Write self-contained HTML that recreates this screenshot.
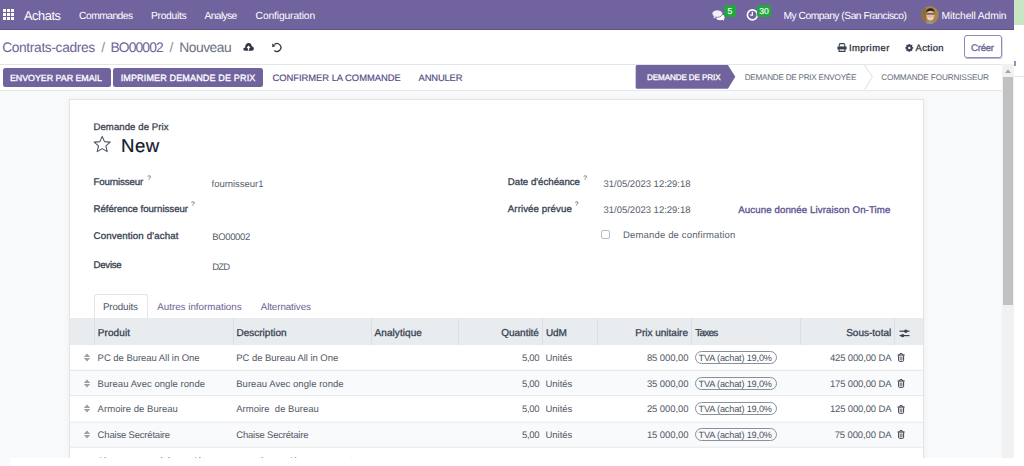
<!DOCTYPE html>
<html><head><meta charset="utf-8"><title>Achats</title>
<style>
html,body{margin:0;padding:0;}
body{width:1024px;height:466px;overflow:hidden;position:relative;background:#fff;font-family:"Liberation Sans",sans-serif;}
.t{position:absolute;white-space:pre;line-height:1;font-family:"Liberation Sans",sans-serif;text-rendering:geometricPrecision;}
.a{position:absolute;box-sizing:border-box;}

</style></head><body>
<!-- navbar -->
<div class=a style="left:0;top:0;width:1014px;height:30px;background:#71639e;"></div>
<div class=a style="left:0;top:29px;width:1014px;height:1px;background:#615588;"></div>
<div class=a style="left:1014px;top:0;width:10px;height:25px;background:#c8e6c1;"></div>
<!-- apps grid -->
<svg class=a style="left:0;top:0" width="20" height="30">
<g fill="#fff">
<rect x="3" y="9" width="3" height="3"/><rect x="7" y="9" width="3" height="3"/><rect x="11" y="9" width="3" height="3"/>
<rect x="3" y="13" width="3" height="3"/><rect x="7" y="13" width="3" height="3"/><rect x="11" y="13" width="3" height="3"/>
<rect x="3" y="17" width="3" height="3"/><rect x="7" y="17" width="3" height="3"/><rect x="11" y="17" width="3" height="3"/>
</g></svg>
<!-- chat icon -->
<svg class=a style="left:708px;top:4px" width="20" height="20" viewBox="0 0 20 20">
<ellipse cx="12.3" cy="13.2" rx="4.3" ry="3" fill="#fff"/>
<path d="M13.8 15.2 L16.2 16.8 L15.6 14.6 Z" fill="#fff"/>
<path d="M5.8 11.8 L5 15 L9 12.6 Z" fill="#f2f0f7" stroke="#71639e" stroke-width="0.6"/>
<ellipse cx="9.3" cy="9.6" rx="5.3" ry="3.7" fill="#f2f0f7" stroke="#71639e" stroke-width="0.8"/>
<path d="M6.3 12 L5.6 14.2 L8.6 12.6 Z" fill="#f2f0f7"/>
</svg>
<div class=a style="left:724px;top:5.3px;width:11.5px;height:12px;background:#22a63f;border-radius:2px;"></div>
<div class=t style="left:727.6px;top:7px;font-size:8.6px;color:#fff;-webkit-text-stroke:0.15px #fff;">5</div>
<!-- clock icon -->
<svg class=a style="left:744px;top:6px" width="18" height="18" viewBox="0 0 18 18">
<circle cx="8.4" cy="8.9" r="5" fill="none" stroke="#fff" stroke-width="1.6"/>
<path d="M8.4 5.8 V9.2 H6.3" fill="none" stroke="#fff" stroke-width="1.2"/>
</svg>
<div class=a style="left:756.7px;top:5.3px;width:14.7px;height:12px;background:#22a63f;border-radius:2px;"></div>
<div class=t style="left:759.2px;top:7px;font-size:8.6px;color:#fff;-webkit-text-stroke:0.15px #fff;">30</div>
<!-- avatar -->
<svg class=a style="left:921.3px;top:5.9px" width="18" height="18" viewBox="0 0 18 18">
<defs><clipPath id="av"><circle cx="9" cy="9" r="8.9"/></clipPath></defs>
<g clip-path="url(#av)">
<rect width="18" height="18" fill="#a8834c"/>
<rect x="0" y="0" width="5" height="18" fill="#8e6e3c"/>
<ellipse cx="9.4" cy="9.6" rx="4" ry="5.2" fill="#e2bba5"/>
<path d="M5 6.5 Q5.5 2.2 9.6 2.3 Q13.6 2.5 13.6 7 L12.6 5.2 Q9.5 4.2 6.2 5.4 Z" fill="#2e241e"/>
<path d="M5.6 7.9 H13.3" stroke="#2b2b2b" stroke-width="1"/>
<path d="M6.8 12.2 Q9.4 13.6 12 12.2" stroke="#f4f0ee" stroke-width="0.9" fill="none"/>
<path d="M3 18 Q9.4 13.5 15.5 18Z" fill="#8b99a3"/>
</g></svg>
<!-- control panel -->
<div class=a style="left:0;top:64px;width:1002px;height:1px;background:#e3e5e8;"></div>
<!-- cloud icon -->
<svg class=a style="left:242px;top:42px" width="13" height="10" viewBox="0 0 13 10">
<path d="M3.2 8.8 Q1.2 8.8 1.3 7 Q1.5 5.4 3.1 5.4 Q3.4 1.2 6.6 1.1 Q9.3 1.2 9.7 4.3 Q11.9 4.4 11.9 6.6 Q11.9 8.8 9.8 8.8 Z" fill="#2f3542"/>
<path d="M6.5 8.6 V4.6 M5 6.1 L6.5 4.4 L8 6.1" fill="none" stroke="#fff" stroke-width="1.1"/>
</svg>
<!-- undo icon -->
<svg class=a style="left:270px;top:41px" width="13" height="12" viewBox="0 0 13 12">
<path d="M4.4 3.6 A3.9 3.9 0 1 1 4.3 9.4" fill="none" stroke="#2f3542" stroke-width="1.3"/>
<path d="M2.2 2.6 L2.3 6.2 L5.6 5 Z" fill="#2f3542"/>
</svg>
<!-- print icon -->
<svg class=a style="left:837px;top:43px" width="10" height="9" viewBox="0 0 10 9">
<path d="M2.3 3.5 V1.6 Q2.3 0.6 3.3 0.6 H6.7 Q7.7 0.6 7.7 1.6 V3.5" fill="none" stroke="#374151" stroke-width="1.1"/>
<path d="M0.4 3.4 H9.6 V6.4 H0.4 Z" fill="#374151"/>
<path d="M2.1 5.6 V8.4 H7.9 V5.6" fill="none" stroke="#374151" stroke-width="1.1"/>
</svg>
<!-- gear icon -->
<svg class=a style="left:905px;top:43.5px" width="9" height="8" viewBox="0 0 9 8">
<g fill="#374151" transform="translate(4.3 3.9)">
<rect x="-0.9" y="-3.9" width="1.8" height="7.8"/>
<rect x="-0.9" y="-3.9" width="1.8" height="7.8" transform="rotate(45)"/>
<rect x="-0.9" y="-3.9" width="1.8" height="7.8" transform="rotate(90)"/>
<rect x="-0.9" y="-3.9" width="1.8" height="7.8" transform="rotate(135)"/>
<circle r="2.9"/>
</g>
<circle cx="4.3" cy="3.9" r="1.2" fill="#fff"/>
</svg>
<!-- Créer button -->
<div class=a style="left:964px;top:35px;width:38.2px;height:23.4px;border:1px solid #9187bb;border-radius:3px;box-shadow:0.5px 1px 0 rgba(113,99,158,0.45);"></div>
<!-- statusbar -->
<div class=a style="left:0;top:90px;width:1002px;height:1px;background:#e5e7eb;"></div>
<div class=a style="left:0;top:91px;width:1002px;height:375px;background:#f8f9fa;"></div>
<div class=a style="left:2.5px;top:67.5px;width:108.3px;height:19.2px;background:#71639e;border-radius:2.5px;"></div>
<div class=a style="left:113.2px;top:67.5px;width:149.6px;height:19.2px;background:#71639e;border-radius:2.5px;"></div>
<svg class=a style="left:630px;top:64px" width="372" height="26" viewBox="0 0 372 26">
<path d="M7.2 1 H97.9 L105.3 12.8 L97.9 24.8 H7.2 Q5.7 24.8 5.7 23.3 V2.5 Q5.7 1 7.2 1 Z" fill="#71639e"/>
<path d="M234.5 1 L242.3 12.8 L234.5 25.5" fill="none" stroke="#dcdfe4" stroke-width="1"/>
</svg>
<!-- scrollbar -->
<div class=a style="left:1002px;top:64px;width:12px;height:394px;background:#f1f1f1;"></div>
<svg class=a style="left:1002px;top:64px" width="12" height="12"><path d="M3 9 L6 5.5 L9 9 Z" fill="#a3a3a3"/></svg>
<div class=a style="left:1003px;top:77px;width:10px;height:228px;background:#c1c1c1;"></div>
<div class=a style="left:1014px;top:76px;width:10px;height:1px;background:#e6e6e6;"></div>
<div class=a style="left:1014px;top:61px;width:2px;height:5px;background:#8796c4;"></div>
<!-- sheet -->
<div class=a style="left:68.5px;top:98.5px;width:855.5px;height:380px;background:#fff;border:1px solid #e2e4e8;box-shadow:0 0 6px rgba(0,0,0,0.04);"></div>
<!-- star -->
<svg class=a style="left:92px;top:135px" width="21" height="19" viewBox="0 0 21 19">
<path d="M10.2 1.4 L12.5 6.6 L18.2 7.1 L13.9 10.9 L15.2 16.6 L10.2 13.6 L5.2 16.6 L6.5 10.9 L2.2 7.1 L7.9 6.6 Z" fill="none" stroke="#4b5563" stroke-width="1.1" stroke-linejoin="round"/>
</svg>
<!-- help marks -->
<div class=t style="left:147.2px;top:175.5px;font-size:6.5px;color:#374151;">?</div>
<div class=t style="left:191.1px;top:202.3px;font-size:6.5px;color:#374151;">?</div>
<div class=t style="left:583.2px;top:175.5px;font-size:6.5px;color:#374151;">?</div>
<div class=t style="left:574.8px;top:202.3px;font-size:6.5px;color:#374151;">?</div>
<!-- checkbox -->
<div class=a style="left:600.6px;top:229.6px;width:9.8px;height:9.4px;border:1px solid #b8bcc4;border-radius:2px;background:#fff;"></div>
<!-- tabs -->
<div class=a style="left:94.2px;top:293.8px;width:54.1px;height:25px;border:1px solid #e3e5e8;border-bottom:none;border-radius:3px 3px 0 0;background:#fff;"></div>
<!-- table -->
<div class=a style="left:69.5px;top:318.2px;width:853.5px;height:26.5px;background:#e9ecef;"></div>
<svg class=a style="left:0;top:318px" width="1024" height="27">
<g stroke="#dcdfe3" stroke-width="1">
<line x1="94.5" y1="0" x2="94.5" y2="27"/><line x1="233.5" y1="0" x2="233.5" y2="27"/><line x1="371.5" y1="0" x2="371.5" y2="27"/>
<line x1="458.5" y1="0" x2="458.5" y2="27"/><line x1="542.5" y1="0" x2="542.5" y2="27"/><line x1="597.5" y1="0" x2="597.5" y2="27"/>
<line x1="691.5" y1="0" x2="691.5" y2="27"/><line x1="800.5" y1="0" x2="800.5" y2="27"/><line x1="894.5" y1="0" x2="894.5" y2="27"/>
</g></svg>
<!-- settings icon -->
<svg class=a style="left:898px;top:327.5px" width="13" height="11" viewBox="0 0 13 11">
<g stroke="#374151" stroke-width="1.2"><line x1="1.5" y1="3.2" x2="11.5" y2="3.2"/><line x1="1.5" y1="7.6" x2="11.5" y2="7.6"/></g>
<circle cx="7.8" cy="3.2" r="1.7" fill="#374151"/><circle cx="4.6" cy="7.6" r="1.7" fill="#374151"/>
</svg>
<!-- rows -->
<div class=a style="left:69.5px;top:370.3px;width:853.5px;height:25.6px;background:#f9fafb;"></div>
<div class=a style="left:69.5px;top:421.5px;width:853.5px;height:25.6px;background:#f9fafb;"></div>
<svg class=a style="left:0;top:340px" width="1024" height="120">
<g stroke="#e5e7eb" stroke-width="1">
<line x1="69.5" y1="30.3" x2="923" y2="30.3"/><line x1="69.5" y1="55.6" x2="923" y2="55.6"/>
<line x1="69.5" y1="82.2" x2="923" y2="82.2"/><line x1="69.5" y1="107.2" x2="923" y2="107.2"/>
</g></svg>
<svg class=a style="left:83px;top:353px" width="8" height="9" viewBox="0 0 8 9"><path d="M0.8 3.95 L4 0.4 L7.2 3.95 Z M0.8 4.95 L4 8.4 L7.2 4.95 Z" fill="#9aa0aa"/></svg>
<div class=a style="left:694.7px;top:350.9px;width:82px;height:13.3px;border:1px solid #8a8f98;border-radius:7px;"></div>
<svg class=a style="left:896.9px;top:353.3px" width="9" height="9" viewBox="0 0 9 9"><path d="M0.6 2 H7.6" stroke="#2f3542" stroke-width="1.1"/><path d="M2.6 1.7 Q2.6 0.4 4.1 0.4 Q5.6 0.4 5.6 1.7" fill="none" stroke="#2f3542" stroke-width="0.9"/><path d="M1.6 2.4 V7.4 Q1.6 8.3 2.5 8.3 H5.7 Q6.6 8.3 6.6 7.4 V2.4" fill="none" stroke="#2f3542" stroke-width="0.95"/><path d="M3.2 3.6 V7.1 M4.1 3.6 V7.1 M5 3.6 V7.1" stroke="#2f3542" stroke-width="0.55"/></svg>
<svg class=a style="left:83px;top:379px" width="8" height="9" viewBox="0 0 8 9"><path d="M0.8 3.95 L4 0.4 L7.2 3.95 Z M0.8 4.95 L4 8.4 L7.2 4.95 Z" fill="#9aa0aa"/></svg>
<div class=a style="left:694.7px;top:376.5px;width:82px;height:13.3px;border:1px solid #8a8f98;border-radius:7px;"></div>
<svg class=a style="left:896.9px;top:378.9px" width="9" height="9" viewBox="0 0 9 9"><path d="M0.6 2 H7.6" stroke="#2f3542" stroke-width="1.1"/><path d="M2.6 1.7 Q2.6 0.4 4.1 0.4 Q5.6 0.4 5.6 1.7" fill="none" stroke="#2f3542" stroke-width="0.9"/><path d="M1.6 2.4 V7.4 Q1.6 8.3 2.5 8.3 H5.7 Q6.6 8.3 6.6 7.4 V2.4" fill="none" stroke="#2f3542" stroke-width="0.95"/><path d="M3.2 3.6 V7.1 M4.1 3.6 V7.1 M5 3.6 V7.1" stroke="#2f3542" stroke-width="0.55"/></svg>
<svg class=a style="left:83px;top:404px" width="8" height="9" viewBox="0 0 8 9"><path d="M0.8 3.95 L4 0.4 L7.2 3.95 Z M0.8 4.95 L4 8.4 L7.2 4.95 Z" fill="#9aa0aa"/></svg>
<div class=a style="left:694.7px;top:402.1px;width:82px;height:13.3px;border:1px solid #8a8f98;border-radius:7px;"></div>
<svg class=a style="left:896.9px;top:404.5px" width="9" height="9" viewBox="0 0 9 9"><path d="M0.6 2 H7.6" stroke="#2f3542" stroke-width="1.1"/><path d="M2.6 1.7 Q2.6 0.4 4.1 0.4 Q5.6 0.4 5.6 1.7" fill="none" stroke="#2f3542" stroke-width="0.9"/><path d="M1.6 2.4 V7.4 Q1.6 8.3 2.5 8.3 H5.7 Q6.6 8.3 6.6 7.4 V2.4" fill="none" stroke="#2f3542" stroke-width="0.95"/><path d="M3.2 3.6 V7.1 M4.1 3.6 V7.1 M5 3.6 V7.1" stroke="#2f3542" stroke-width="0.55"/></svg>
<svg class=a style="left:83px;top:430px" width="8" height="9" viewBox="0 0 8 9"><path d="M0.8 3.95 L4 0.4 L7.2 3.95 Z M0.8 4.95 L4 8.4 L7.2 4.95 Z" fill="#9aa0aa"/></svg>
<div class=a style="left:694.7px;top:427.7px;width:82px;height:13.3px;border:1px solid #8a8f98;border-radius:7px;"></div>
<svg class=a style="left:896.9px;top:430.1px" width="9" height="9" viewBox="0 0 9 9"><path d="M0.6 2 H7.6" stroke="#2f3542" stroke-width="1.1"/><path d="M2.6 1.7 Q2.6 0.4 4.1 0.4 Q5.6 0.4 5.6 1.7" fill="none" stroke="#2f3542" stroke-width="0.9"/><path d="M1.6 2.4 V7.4 Q1.6 8.3 2.5 8.3 H5.7 Q6.6 8.3 6.6 7.4 V2.4" fill="none" stroke="#2f3542" stroke-width="0.95"/><path d="M3.2 3.6 V7.1 M4.1 3.6 V7.1 M5 3.6 V7.1" stroke="#2f3542" stroke-width="0.55"/></svg>
<!-- bottom add-line partial text -->
<div class=a style="left:10px;top:458px;width:1014px;height:8px;background:#fff;z-index:5;"></div>

<div class=t style="top:10.00px;font-size:12.80px;color:#fff;letter-spacing:-0.426px;left:23.99px;">Achats</div>
<div class=t style="top:12.00px;font-size:10.30px;color:#fff;letter-spacing:-0.549px;left:79.09px;">Commandes</div>
<div class=t style="top:12.00px;font-size:10.30px;color:#fff;letter-spacing:-0.327px;left:151.09px;">Produits</div>
<div class=t style="top:12.00px;font-size:10.30px;color:#fff;letter-spacing:-0.674px;left:204.59px;">Analyse</div>
<div class=t style="top:12.00px;font-size:10.30px;color:#fff;letter-spacing:-0.139px;left:255.59px;">Configuration</div>
<div class=t style="top:12.00px;font-size:10.30px;color:#fff;letter-spacing:-0.513px;left:783.49px;">My Company (San Francisco)</div>
<div class=t style="top:12.00px;font-size:10.30px;color:#fff;letter-spacing:-0.108px;left:941.59px;">Mitchell Admin</div>
<div class=t style="top:41.00px;font-size:13.80px;color:#6f6496;letter-spacing:-0.362px;left:2.15px;">Contrats-cadres</div>
<div class=t style="top:41.00px;font-size:13.80px;color:#8a8f98;left:101.15px;">/</div>
<div class=t style="top:41.00px;font-size:13.80px;color:#6f6496;letter-spacing:-0.852px;left:110.45px;">BO00002</div>
<div class=t style="top:41.00px;font-size:13.80px;color:#8a8f98;left:169.45px;">/</div>
<div class=t style="top:41.00px;font-size:13.80px;color:#6b7280;letter-spacing:-0.473px;left:179.25px;">Nouveau</div>
<div class=t style="top:43.00px;font-size:9.40px;color:#2f3542;letter-spacing:0.489px;left:848.92px;-webkit-text-stroke:0.3px #2f3542;">Imprimer</div>
<div class=t style="top:43.00px;font-size:9.40px;color:#2f3542;letter-spacing:0.355px;left:915.62px;-webkit-text-stroke:0.3px #2f3542;">Action</div>
<div class=t style="top:44.00px;font-size:9.60px;color:#6a5d9a;letter-spacing:-0.301px;left:971.12px;-webkit-text-stroke:0.3px #6a5d9a;">Créer</div>
<div class=t style="top:74.00px;font-size:8.90px;color:#fff;letter-spacing:-0.032px;left:9.94px;-webkit-text-stroke:0.3px #fff;">ENVOYER PAR EMAIL</div>
<div class=t style="top:74.00px;font-size:9.10px;color:#fff;letter-spacing:0.101px;left:120.64px;-webkit-text-stroke:0.3px #fff;">IMPRIMER DEMANDE DE PRIX</div>
<div class=t style="top:73.00px;font-size:9.40px;color:#504b82;letter-spacing:-0.025px;left:272.52px;-webkit-text-stroke:0.15px #504b82;">CONFIRMER LA COMMANDE</div>
<div class=t style="top:73.00px;font-size:9.40px;color:#504b82;letter-spacing:-0.154px;left:418.62px;-webkit-text-stroke:0.15px #504b82;">ANNULER</div>
<div class=t style="top:74.00px;font-size:8.10px;color:#fff;letter-spacing:-0.104px;left:646.98px;-webkit-text-stroke:0.3px #fff;">DEMANDE DE PRIX</div>
<div class=t style="top:74.00px;font-size:8.20px;color:#656b78;letter-spacing:-0.273px;left:744.67px;">DEMANDE DE PRIX ENVOYÉE</div>
<div class=t style="top:74.00px;font-size:8.20px;color:#656b78;letter-spacing:-0.142px;left:881.17px;">COMMANDE FOURNISSEUR</div>
<div class=t style="top:123.00px;font-size:9.60px;color:#3f4550;letter-spacing:0.074px;left:93.42px;-webkit-text-stroke:0.3px #3f4550;">Demande de Prix</div>
<div class=t style="top:137.00px;font-size:18.60px;color:#111827;letter-spacing:0.494px;left:121.06px;-webkit-text-stroke:0.2px #111827;">New</div>
<div class=t style="top:178.00px;font-size:9.70px;color:#374151;letter-spacing:-0.141px;left:93.51px;-webkit-text-stroke:0.3px #374151;">Fournisseur</div>
<div class=t style="top:180.00px;font-size:9.50px;color:#575e6b;letter-spacing:-0.043px;left:211.62px;">fournisseur1</div>
<div class=t style="top:205.00px;font-size:9.70px;color:#374151;letter-spacing:-0.037px;left:93.51px;-webkit-text-stroke:0.3px #374151;">Référence fournisseur</div>
<div class=t style="top:232.00px;font-size:9.70px;color:#374151;letter-spacing:0.133px;left:93.51px;-webkit-text-stroke:0.3px #374151;">Convention d&#x27;achat</div>
<div class=t style="top:233.00px;font-size:9.50px;color:#575e6b;letter-spacing:-0.357px;left:212.22px;">BO00002</div>
<div class=t style="top:261.00px;font-size:9.70px;color:#374151;letter-spacing:-0.270px;left:93.51px;-webkit-text-stroke:0.3px #374151;">Devise</div>
<div class=t style="top:263.00px;font-size:9.50px;color:#575e6b;letter-spacing:-0.763px;left:212.22px;">DZD</div>
<div class=t style="top:178.00px;font-size:9.70px;color:#374151;letter-spacing:-0.014px;left:507.81px;-webkit-text-stroke:0.3px #374151;">Date d&#x27;échéance</div>
<div class=t style="top:180.00px;font-size:9.50px;color:#575e6b;letter-spacing:-0.009px;left:603.52px;">31/05/2023 12:29:18</div>
<div class=t style="top:205.00px;font-size:9.70px;color:#374151;letter-spacing:0.079px;left:507.81px;-webkit-text-stroke:0.3px #374151;">Arrivée prévue</div>
<div class=t style="top:206.00px;font-size:9.50px;color:#575e6b;letter-spacing:-0.009px;left:603.52px;">31/05/2023 12:29:18</div>
<div class=t style="top:206.00px;font-size:9.70px;color:#5b5290;letter-spacing:0.095px;left:738.21px;-webkit-text-stroke:0.3px #5b5290;">Aucune donnée Livraison On-Time</div>
<div class=t style="top:231.00px;font-size:9.50px;color:#575e6b;letter-spacing:0.160px;left:623.02px;">Demande de confirmation</div>
<div class=t style="top:303.00px;font-size:9.80px;color:#4b5563;letter-spacing:-0.122px;left:102.91px;">Produits</div>
<div class=t style="top:303.00px;font-size:9.80px;color:#6a6392;left:157.21px;">Autres informations</div>
<div class=t style="top:303.00px;font-size:9.80px;color:#6a6392;letter-spacing:-0.091px;left:260.71px;">Alternatives</div>
<div class=t style="top:329.00px;font-size:10.00px;color:#374151;letter-spacing:0.086px;left:97.80px;-webkit-text-stroke:0.3px #374151;">Produit</div>
<div class=t style="top:329.00px;font-size:10.00px;color:#374151;left:236.50px;-webkit-text-stroke:0.3px #374151;">Description</div>
<div class=t style="top:329.00px;font-size:10.00px;color:#374151;letter-spacing:0.078px;left:374.50px;-webkit-text-stroke:0.3px #374151;">Analytique</div>
<div class=t style="top:329.00px;font-size:10.00px;color:#374151;letter-spacing:-0.029px;right:485.13px;-webkit-text-stroke:0.3px #374151;">Quantité</div>
<div class=t style="top:329.00px;font-size:10.00px;color:#374151;letter-spacing:-0.107px;left:546.00px;-webkit-text-stroke:0.3px #374151;">UdM</div>
<div class=t style="top:329.00px;font-size:10.00px;color:#374151;letter-spacing:-0.008px;right:336.01px;-webkit-text-stroke:0.3px #374151;">Prix unitaire</div>
<div class=t style="top:329.00px;font-size:10.00px;color:#374151;letter-spacing:-0.806px;left:695.30px;-webkit-text-stroke:0.3px #374151;">Taxes</div>
<div class=t style="top:329.00px;font-size:10.00px;color:#374151;right:132.80px;-webkit-text-stroke:0.3px #374151;">Sous-total</div>
<div class=t style="top:354.00px;font-size:9.50px;color:#525966;letter-spacing:-0.044px;left:97.62px;">PC de Bureau All in One</div>
<div class=t style="top:354.00px;font-size:9.50px;color:#525966;letter-spacing:-0.044px;left:236.22px;">PC de Bureau All in One</div>
<div class=t style="top:354.00px;font-size:9.50px;color:#525966;letter-spacing:-0.297px;right:484.80px;">5,00</div>
<div class=t style="top:354.00px;font-size:9.50px;color:#525966;letter-spacing:-0.026px;left:545.52px;">Unités</div>
<div class=t style="top:354.00px;font-size:9.50px;color:#525966;letter-spacing:-0.083px;right:335.58px;">85 000,00</div>
<div class=t style="top:354.00px;font-size:9.20px;color:#4b5563;letter-spacing:-0.183px;left:698.53px;">TVA (achat) 19,0%</div>
<div class=t style="top:354.00px;font-size:9.50px;color:#525966;letter-spacing:-0.149px;right:132.65px;">425 000,00 DA</div>
<div class=t style="top:380.00px;font-size:9.50px;color:#525966;letter-spacing:0.040px;left:97.62px;">Bureau Avec ongle ronde</div>
<div class=t style="top:380.00px;font-size:9.50px;color:#525966;letter-spacing:0.040px;left:236.22px;">Bureau Avec ongle ronde</div>
<div class=t style="top:380.00px;font-size:9.50px;color:#525966;letter-spacing:-0.297px;right:484.80px;">5,00</div>
<div class=t style="top:380.00px;font-size:9.50px;color:#525966;letter-spacing:-0.026px;left:545.52px;">Unités</div>
<div class=t style="top:380.00px;font-size:9.50px;color:#525966;letter-spacing:-0.083px;right:335.58px;">35 000,00</div>
<div class=t style="top:380.00px;font-size:9.20px;color:#4b5563;letter-spacing:-0.183px;left:698.53px;">TVA (achat) 19,0%</div>
<div class=t style="top:380.00px;font-size:9.50px;color:#525966;letter-spacing:-0.149px;right:132.65px;">175 000,00 DA</div>
<div class=t style="top:405.00px;font-size:9.50px;color:#525966;letter-spacing:0.035px;left:97.62px;">Armoire de Bureau</div>
<div class=t style="top:405.00px;font-size:9.50px;color:#525966;letter-spacing:0.013px;left:236.22px;">Armoire  de Bureau</div>
<div class=t style="top:405.00px;font-size:9.50px;color:#525966;letter-spacing:-0.297px;right:484.80px;">5,00</div>
<div class=t style="top:405.00px;font-size:9.50px;color:#525966;letter-spacing:-0.026px;left:545.52px;">Unités</div>
<div class=t style="top:405.00px;font-size:9.50px;color:#525966;letter-spacing:-0.083px;right:335.58px;">25 000,00</div>
<div class=t style="top:405.00px;font-size:9.20px;color:#4b5563;letter-spacing:-0.183px;left:698.53px;">TVA (achat) 19,0%</div>
<div class=t style="top:405.00px;font-size:9.50px;color:#525966;letter-spacing:-0.149px;right:132.65px;">125 000,00 DA</div>
<div class=t style="top:431.00px;font-size:9.50px;color:#525966;letter-spacing:-0.188px;left:97.62px;">Chaise Secrétaire</div>
<div class=t style="top:431.00px;font-size:9.50px;color:#525966;letter-spacing:-0.201px;left:236.22px;">Chaise Secrétaire</div>
<div class=t style="top:431.00px;font-size:9.50px;color:#525966;letter-spacing:-0.297px;right:484.80px;">5,00</div>
<div class=t style="top:431.00px;font-size:9.50px;color:#525966;letter-spacing:-0.026px;left:545.52px;">Unités</div>
<div class=t style="top:431.00px;font-size:9.50px;color:#525966;letter-spacing:-0.083px;right:335.58px;">15 000,00</div>
<div class=t style="top:431.00px;font-size:9.20px;color:#4b5563;letter-spacing:-0.183px;left:698.53px;">TVA (achat) 19,0%</div>
<div class=t style="top:431.00px;font-size:9.50px;color:#525966;letter-spacing:-0.113px;right:132.61px;">75 000,00 DA</div>
<div class=t style="top:457.00px;font-size:9.50px;color:#71639e;left:97.62px;">Ajouter un produit</div>
<div class=t style="top:457.00px;font-size:9.50px;color:#71639e;left:192.42px;">Ajouter une section</div>
<div class=t style="top:457.00px;font-size:9.50px;color:#71639e;left:288.22px;">Ajouter une note</div>
</body></html>
